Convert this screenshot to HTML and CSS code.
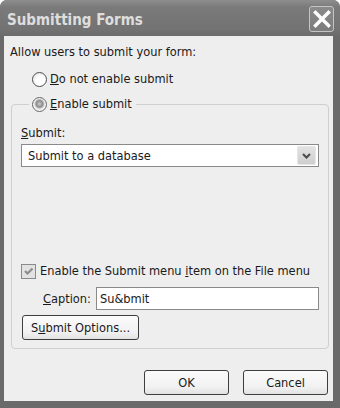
FILE: index.html
```html
<!DOCTYPE html>
<html lang="en">
<head>
    <meta charset="UTF-8">
    <title>Submitting Forms</title>
    <link rel="stylesheet" href="styles.css">
</head>
<body>
    <div class="window">
        <div class="titlebar">
            <span class="title">Submitting Forms</span>
            <span class="close">
                <svg width="18" height="18" viewBox="0 0 18 18">
                    <path d="M2.5 2.5 L15.5 15.5 M15.5 2.5 L2.5 15.5" stroke="#fff" stroke-width="3.4" stroke-linecap="square"/>
                </svg>
            </span>
        </div>

        <div class="content">
            <div class="intro">Allow users to submit your form:</div>

            <div class="radio-row first">
                <span class="radio"></span>
                <span><u>D</u>o not enable submit</span>
            </div>

            <!-- Enable submit group -->
            <fieldset class="group">
                <legend class="radio-row">
                    <span class="radio checked"></span>
                    <span><u>E</u>nable submit</span>
                </legend>

                <div class="label"><u>S</u>ubmit:</div>
                <div class="select">
                    <span>Submit to a database</span>
                    <span class="arrow">
                        <svg width="9" height="6" viewBox="0 0 9 6">
                            <path d="M1 1 L4.5 4.5 L8 1" fill="none" stroke="#4a4a4a" stroke-width="2"/>
                        </svg>
                    </span>
                </div>

                <div class="check-row">
                    <span class="checkbox">
                        <svg width="11" height="11" viewBox="0 0 11 11">
                            <path d="M2 5 L4.5 7.5 L9.5 2.5" fill="none" stroke="#8c8c8c" stroke-width="2.2"/>
                        </svg>
                    </span>
                    <span>Enable the Submit menu <u>i</u>tem on the File menu</span>
                </div>

                <div class="caption-row">
                    <span><u>C</u>aption:</span>
                    <div class="textbox">Su&amp;bmit</div>
                </div>

                <button class="btn options">S<u>u</u>bmit Options...</button>
            </fieldset>

            <div class="footer">
                <button class="btn">OK</button>
                <button class="btn">Cancel</button>
            </div>
        </div>
    </div>
</body>
</html>
```

FILE: styles.css
```css
body {
    margin: 0;
    padding: 0;
    background-color: #fff;
}

.window {
    width: 340px;
    height: 408px;
    background-color: #6a6a6a;
    border-radius: 7px 7px 0 0;
    overflow: hidden;
    font-family: "DejaVu Sans Condensed", "DejaVu Sans", sans-serif;
    font-size: 12.7px;
    color: #1a1a1a;
}

.titlebar {
    height: 36px;
    display: flex;
    align-items: center;
    justify-content: space-between;
    padding: 0 6px 0 7px;
    background: linear-gradient(#8e8e8e, #7a7a7a 20%, #737373 80%, #6c6c6c);
}

.title {
    font-family: "DejaVu Sans Condensed", "DejaVu Sans", sans-serif;
    font-weight: bold;
    font-size: 15px;
    color: #dedede;
    margin-top: 3px;
}

.close {
    width: 23px;
    height: 24px;
    border: 1px solid #c4c4c4;
    border-radius: 3px;
    background: linear-gradient(#8a8a8a, #7c7c7c);
    display: flex;
    align-items: center;
    justify-content: center;
    margin-top: 1px;
}

.content {
    height: 365px;
    margin: 0 7px 0 4px;
    background-color: #eeeeee;
    overflow: hidden;
}

.intro {
    margin: 8px 0 0 6px;
    line-height: 16px;
}

.radio-row {
    display: flex;
    align-items: center;
    gap: 3px;
    line-height: 16px;
}

.radio-row.first {
    margin: 11px 0 0 28px;
}

.radio {
    width: 13px;
    height: 13px;
    border: 1px solid #4e4e4e;
    border-radius: 50%;
    background: radial-gradient(circle at 60% 65%, #fff 40%, #dcdcdc);
}

.radio.checked {
    border-color: #6a6a6a;
    background: radial-gradient(circle at 50% 45%, #cfcfcf 0, #8e8e8e 32%, #9a9a9a 38%, #e4e4e4 52%, #f6f6f6 70%);
}

.group {
    margin: 9px 4px 0 7px;
    padding: 13px 9px 8px 9px;
    border: 1px solid #cfcfcf;
    border-radius: 4px;
}

.group legend {
    margin-left: 8px;
    padding: 0 4px 0 3px;
}

.label {
    line-height: 16px;
}

.select {
    margin-top: 3px;
    height: 21px;
    border: 1px solid #8a8a8a;
    background-color: #fff;
    display: flex;
    align-items: center;
    justify-content: space-between;
    padding: 0 2px 0 6px;
}

.arrow {
    width: 17px;
    height: 17px;
    border: 1px solid #e6e6e6;
    border-radius: 2px;
    background: linear-gradient(#e2e2e2, #cfcfcf);
    display: flex;
    align-items: center;
    justify-content: center;
}

.check-row {
    margin-top: 96px;
    display: flex;
    align-items: center;
    gap: 4px;
    line-height: 16px;
}

.checkbox {
    width: 13px;
    height: 13px;
    border: 1px solid #8a8a8a;
    background-color: #e2e2e2;
    display: flex;
    align-items: center;
    justify-content: center;
}

.caption-row {
    margin-top: 8px;
    padding-left: 22px;
    display: flex;
    align-items: center;
    gap: 5px;
}

.textbox {
    flex: 1;
    height: 21px;
    line-height: 21px;
    border: 1px solid #8a8a8a;
    background-color: #fff;
    padding-left: 3px;
}

.btn {
    height: 25px;
    padding: 0;
    border: 1px solid #3e3e3e;
    border-radius: 3px;
    background: linear-gradient(#fbfbfb, #f1f1f1 70%, #e2e2e2);
    font-family: "DejaVu Sans Condensed", "DejaVu Sans", sans-serif;
    font-size: 12.7px;
    color: #1a1a1a;
}

.options {
    display: block;
    margin: 5px 0 0 1px;
    width: 117px;
}

.footer {
    margin-top: 21px;
    padding-right: 5px;
    display: flex;
    justify-content: flex-end;
    gap: 14px;
}

.footer .btn {
    width: 85px;
}
```
